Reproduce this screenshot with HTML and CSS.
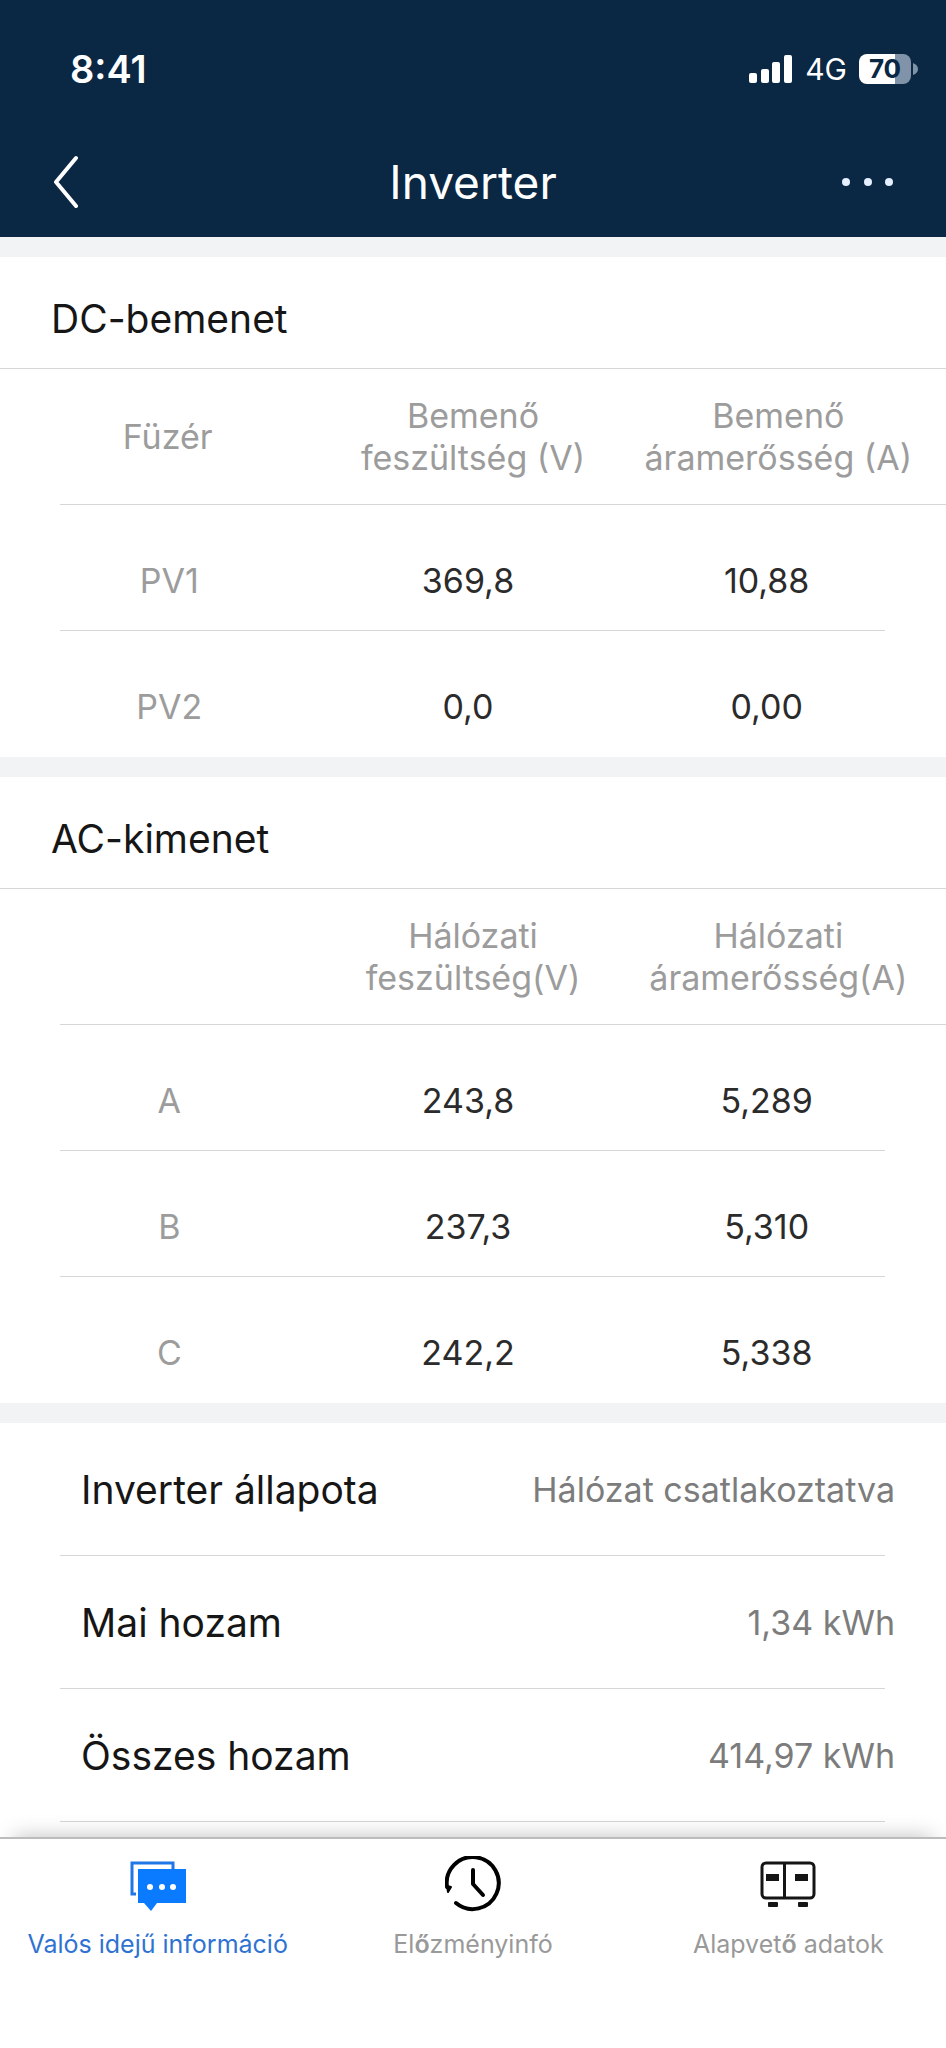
FILE: index.html
```html
<!DOCTYPE html>
<html lang="hu">
<head>
  <meta charset="UTF-8"/>
  <meta name="viewport" content="width=device-width, initial-scale=1"/>
  <title>Inverter</title>
  <link rel="stylesheet" href="styles.css">
</head>
<body>
  <header class="top">
    <div class="status">
      <span class="time">8:41</span>
      <svg class="signal" width="44" height="28" viewBox="0 0 44 28" fill="#fff">
        <rect x="0" y="18" width="8" height="10" rx="2"/>
        <rect x="12" y="14" width="8" height="14" rx="2"/>
        <rect x="23" y="7" width="8" height="21" rx="2"/>
        <rect x="35" y="0" width="8" height="28" rx="2"/>
      </svg>
      <span class="network">4G</span>
      <span class="battery">70</span>
      <svg class="nub" width="5" height="12" viewBox="0 0 5 12"><path d="M0 0Q5 2 5 6T0 12Z" fill="#7f93a8"/></svg>
    </div>
    <div class="navbar">
      <button class="icon-btn" aria-label="Vissza">
        <svg width="26" height="54" viewBox="0 0 26 54" fill="none" stroke="#fff" stroke-width="4" stroke-linecap="round" stroke-linejoin="round"><path d="M24 3L4 27L24 51"/></svg>
      </button>
      <h1>Inverter</h1>
      <button class="icon-btn more" aria-label="Menü">
        <svg width="52" height="8" viewBox="0 0 52 8" fill="#e4efff"><circle cx="4" cy="4" r="4"/><circle cx="26" cy="4" r="4"/><circle cx="47" cy="4" r="4"/></svg>
      </button>
    </div>
  </header>

  <main>
    <section>
      <h2>DC-bemenet</h2>
      <table>
        <thead>
          <tr><th>Füzér</th><th>Bemenő<br>feszültség (V)</th><th>Bemenő<br>áramerősség (A)</th></tr>
        </thead>
        <tbody>
          <tr><th>PV1</th><td>369,8</td><td>10,88</td></tr>
          <tr><th>PV2</th><td>0,0</td><td>0,00</td></tr>
        </tbody>
      </table>
    </section>

    <section>
      <h2>AC-kimenet</h2>
      <table>
        <thead>
          <tr><th></th><th>Hálózati<br>feszültség(V)</th><th>Hálózati<br>áramerősség(A)</th></tr>
        </thead>
        <tbody>
          <tr><th>A</th><td>243,8</td><td>5,289</td></tr>
          <tr><th>B</th><td>237,3</td><td>5,310</td></tr>
          <tr><th>C</th><td>242,2</td><td>5,338</td></tr>
        </tbody>
      </table>
    </section>

    <section>
      <dl>
        <div class="row"><dt>Inverter állapota</dt><dd>Hálózat csatlakoztatva</dd></div>
        <div class="row"><dt>Mai hozam</dt><dd>1,34 kWh</dd></div>
        <div class="row"><dt>Összes hozam</dt><dd>414,97 kWh</dd></div>
      </dl>
    </section>
  </main>

  <nav class="tabs">
    <button class="tab active">
      <svg width="56" height="56" viewBox="0 0 56 56">
        <path d="M6 38H2V7H43V13" fill="none" stroke="#2277e6" stroke-width="3"/>
        <path d="M8 13H56V47H27L21 55L14 47H8Z" fill="#0a7aff"/>
        <g fill="#fff"><circle cx="20" cy="31" r="3"/><circle cx="32" cy="31" r="3"/><circle cx="43" cy="31" r="3"/></g>
      </svg>
      <span>Valós idejű információ</span>
    </button>
    <button class="tab">
      <svg width="56" height="56" viewBox="0 0 56 56" fill="none" stroke="#000" stroke-width="4" stroke-linecap="round" stroke-linejoin="round">
        <path d="M11 47A26 26 0 1 0 2 31"/>
        <path d="M28 14V28L38 39"/>
        <path d="M2 30L6 31L3 36Z" stroke-width="2" fill="#000"/>
      </svg>
      <span>El<b>ő</b>zményinfó</span>
    </button>
    <button class="tab">
      <svg width="56" height="56" viewBox="0 0 56 56" fill="#151515">
        <rect x="2" y="7" width="52" height="35" rx="4" fill="none" stroke="#151515" stroke-width="3"/>
        <rect x="23" y="6" width="3" height="37"/>
        <rect x="6" y="18" width="13" height="7"/>
        <rect x="35" y="18" width="13" height="7"/>
        <rect x="8" y="46" width="10" height="5" rx="1"/>
        <rect x="38" y="46" width="10" height="5" rx="1"/>
      </svg>
      <span>Alapvet<b>ő</b> adatok</span>
    </button>
  </nav>
</body>
</html>
```

FILE: styles.css
```css
* { margin:0; padding:0; box-sizing:border-box }
body {
  display:flex; flex-direction:column; min-height:100vh;
  font-family:Inter,"Liberation Sans",sans-serif;
  background:#fff; color:#161616;
}
button { background:none; border:none; font:inherit; color:inherit; cursor:pointer }
svg { display:block }

/* Header */
.top { background:#0a2744; color:#fff }
.status {
  display:flex; align-items:center;
  height:126px; padding:12px 28px 0 70px;
}
.time { flex:1; font-size:38px; font-weight:600 }
.network { margin:0 12px; font-size:30px }
.battery {
  width:52px; height:30px; border-radius:8px;
  background:linear-gradient(90deg,#fff 70%,#8093a8 70%);
  color:#0a2744; font-size:26px; font-weight:700;
  line-height:30px; text-align:center;
}
.nub { margin-left:2px }
.navbar {
  display:flex; align-items:center; justify-content:space-between;
  height:111px; padding:0 52px;
}
.icon-btn { display:flex; align-items:center; width:54px; height:54px }
.icon-btn.more { justify-content:flex-end }
h1 { font-size:46px; font-weight:400 }

/* Sections */
section { border-top:20px solid #f2f3f5 }
h2 {
  padding:12px 51px 0; border-bottom:1px solid #d6d6d6;
  font-size:39px; font-weight:400; line-height:99px;
}
table { display:block; font-size:34px; text-align:center }
thead, tbody { display:block }
tr {
  display:grid; grid-template-columns:repeat(3,1fr); align-items:center;
  background:linear-gradient(#d6d6d6,#d6d6d6) no-repeat 60px 100%;
}
thead tr { height:136px; padding:0 15px; background-size:100% 1px }
tbody tr {
  height:126px; padding:26px 30px 0 20px;
  background-size:calc(100% - 121px) 1px;
  background-position:60px 100%;
}
tbody tr:last-child { background:none }
th { color:#9c9c9c; font-weight:400; line-height:42px; white-space:nowrap }
td { color:#2b2b2b; line-height:42px }

/* Summary rows */
.row {
  display:flex; align-items:center; justify-content:space-between;
  height:133px; padding:0 51px 0 81px;
  background:linear-gradient(#d6d6d6,#d6d6d6) no-repeat 60px 100%;
  background-size:calc(100% - 121px) 1px;
}
dt { font-size:39px }
dd { font-size:34px; color:#7c7c7c }

/* Bottom tabs */
.tabs {
  display:grid; grid-template-columns:repeat(3,1fr);
  height:211px; margin-top:auto; background:#fff;
  border-top:2px solid #bcbcbc;
  box-shadow:0 -14px 20px -14px rgba(0,0,0,.25);
}
.tab {
  display:flex; flex-direction:column; align-items:center; gap:16px;
  padding-top:17px; font-size:25px; line-height:32px; color:#999;
}
.tab.active { color:#2f73d2 }
.tab b { font-weight:600 }
```
